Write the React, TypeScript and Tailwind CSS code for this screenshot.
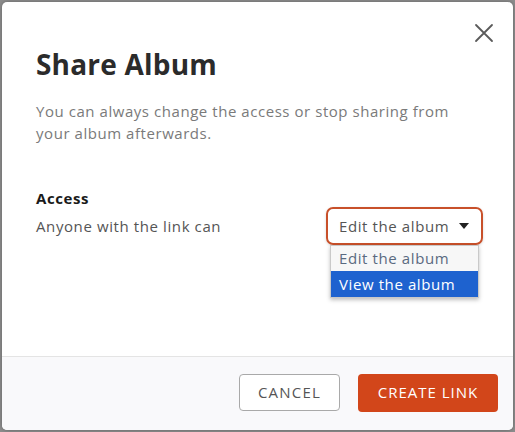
import React from "react";

export default function App() {
  const font = { fontFamily: '"Open Sans", "Liberation Sans", sans-serif' };
  return (
    <div className="w-[515px] h-[432px] bg-[#8d8d8d] p-[2px]" style={font}>
      <div className="w-full h-full bg-white rounded-[5px] flex flex-col overflow-hidden shadow-[0_0_4px_rgba(0,0,0,0.3)]">
        <div className="flex-1 relative px-[34px]">
          <button className="absolute right-[18px] top-[20px] w-[22px] h-[22px] flex items-center justify-center text-[#555]">
            <svg width="20" height="20" viewBox="0 0 20 20" fill="none" stroke="#5a5a5a" strokeWidth="1.8" strokeLinecap="round">
              <path d="M2 2 L18 18 M18 2 L2 18" />
            </svg>
          </button>
          <h1 className="mt-[42px] text-[28px] leading-[40px] font-bold text-[#2b2b2b] tracking-[0.2px]">Share Album</h1>
          <p className="mt-[16px] text-[15px] leading-[22px] text-[#7a7a7a] w-[440px] tracking-[0.55px]">
            You can always change the access or stop sharing from your album afterwards.
          </p>
          <div className="mt-[44px] text-[15px] leading-[20px] font-bold text-[#1a1a1a] tracking-[0.6px]">Access</div>
          <div className="flex items-start justify-between">
            <div className="mt-[8px] text-[15px] leading-[20px] text-[#555] tracking-[0.6px]">Anyone with the link can</div>
            <div className="relative mr-[-4px] mt-[-1px]">
              <div className="w-[157px] h-[38px] border-2 border-[#c8502a] rounded-[7px] flex items-center pl-[11px] pr-[12px] justify-between shadow-[0_1px_3px_rgba(0,0,0,0.15)]">
                <span className="text-[15px] text-[#555] tracking-[0.6px]">Edit the album</span>
                <svg width="10" height="6" viewBox="0 0 10 6"><path d="M0 0 L10 0 L5 6 Z" fill="#222" /></svg>
              </div>
              <div className="absolute left-[4px] top-[38px] w-[149px] border border-[#c9c9c9] bg-white shadow-[0_2px_4px_rgba(0,0,0,0.25)]">
                <div className="h-[25px] px-[8px] flex items-center text-[15px] text-[#5a6a80] bg-[#f7f7f7] tracking-[0.6px]">Edit the album</div>
                <div className="h-[26px] px-[8px] flex items-center text-[15px] text-white bg-[#1e62cf] tracking-[0.6px]">View the album</div>
              </div>
            </div>
          </div>
        </div>
        <div className="h-[74px] border-t border-[#e4e4e4] bg-[#f9f9fb] flex items-center justify-end gap-[18px] pr-[15px] pb-[2px]">
          <button className="w-[101px] h-[37px] border border-[#a9a9a9] rounded-[4px] bg-white text-[15px] text-[#555] tracking-[1.2px]">CANCEL</button>
          <button className="w-[140px] h-[38px] rounded-[4px] bg-[#d2461a] text-[15px] text-white tracking-[1px]">CREATE LINK</button>
        </div>
      </div>
    </div>
  );
}
